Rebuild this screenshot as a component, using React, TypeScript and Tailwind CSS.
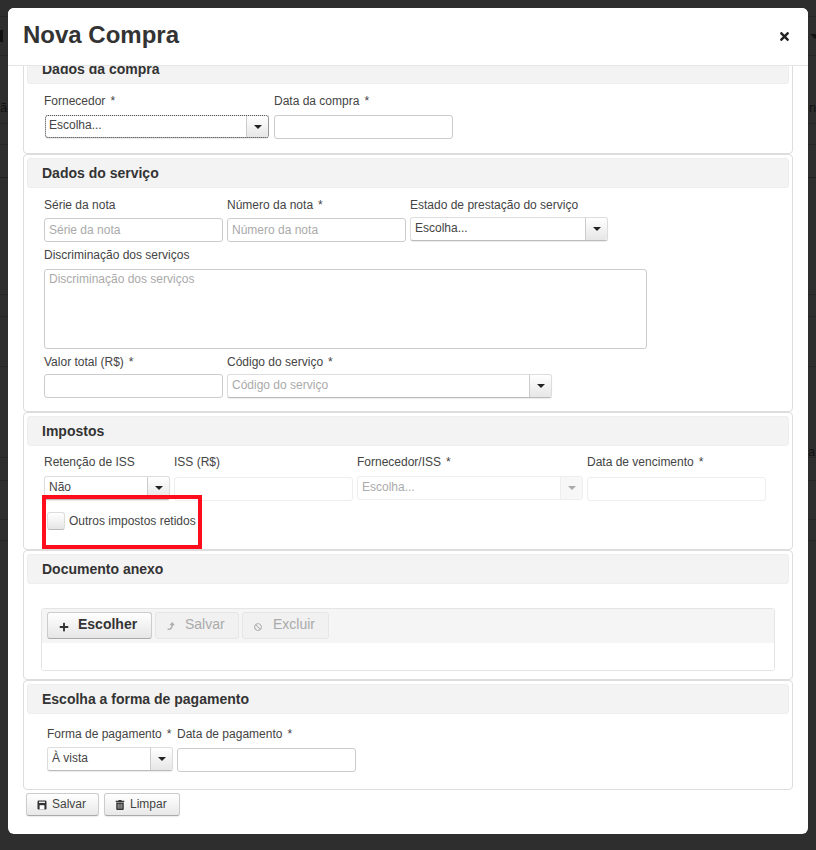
import type { ReactNode } from "react";
import { FaBan, FaPlus, FaTimes, FaTrashAlt } from "react-icons/fa";

const Caret = ({ faded }: { faded?: boolean }) => (
  <span className={`block w-0 h-0 border-x-[4px] border-x-transparent border-t-[4px] ${faded ? "border-t-[#aaa]" : "border-t-[#222]"}`} />
);

const Field = ({ label, required, labelClassName = "mb-[6px]", className, children }: { label: string; required?: boolean; labelClassName?: string; className: string; children: ReactNode }) => (
  <div className={`flex flex-col shrink-0 ${className}`}>
    <label className={`h-[14px] leading-[14px] whitespace-nowrap text-[12px] text-[#444] ${labelClassName}`}>
      {label}
      {required && <span className="ml-[5px]">*</span>}
    </label>
    {children}
  </div>
);

const TextInput = ({ placeholder, disabled }: { placeholder?: string; disabled?: boolean }) => (
  <input
    placeholder={placeholder}
    disabled={disabled}
    className={`mt-px h-[24px] w-full px-[4px] text-[12px] bg-white rounded-[3px] border outline-none placeholder:text-[#aaa] ${disabled ? "border-[#eee]" : "border-[#ccc]"}`}
  />
);

const Select = ({ value, className, placeholder, disabled, focused }: { value: string; className: string; placeholder?: boolean; disabled?: boolean; focused?: boolean }) => (
  <div
    className={`relative flex rounded-[3px] border bg-white ${className} ${disabled ? "border-[#eee]" : "border-[#ddd] border-b-[#bbb] shadow-[0_1px_1px_rgba(0,0,0,0.08)]"} ${focused ? "mt-px h-[23px] outline-1 -outline-offset-1 outline-dotted outline-[#555]" : "h-[24px]"}`}
  >
    <span className={`flex-1 text-[12px] leading-[16px] whitespace-nowrap ${focused ? "pl-[3px] pt-[1px]" : "pl-[4px] pt-[2px]"} ${placeholder ? "text-[#aaa]" : "text-[#444]"}`}>{value}</span>
    <span
      className={`flex w-[22px] items-center justify-center rounded-r-[3px] border-l ${disabled ? "border-[#eee] bg-[#f7f7f7]" : "border-[#ccc] bg-gradient-to-b from-[#fff] to-[#e6e6e6]"}`}
    >
      <Caret faded={disabled} />
    </span>
  </div>
);

const Panel = ({ title, className, bodyClassName, children }: { title: string; className: string; bodyClassName: string; children: ReactNode }) => (
  <section className={`relative shrink-0 rounded-[4px] border border-[#ddd] p-[3px] ${className}`}>
    <h3 className="h-[30px] pl-[14px] rounded-[3px] border border-[#eee] bg-[#f3f3f3] text-[14px] font-bold leading-[28px] text-[#333]">{title}</h3>
    <div className={bodyClassName}>{children}</div>
  </section>
);

const ToolButton = ({ icon, label, bold, disabled, className }: { icon: ReactNode; label: string; bold?: boolean; disabled?: boolean; className: string }) => (
  <button
    className={`flex h-[27px] items-center rounded-[3px] border text-[14px] ${className} ${bold ? "font-bold text-[#333]" : ""} ${disabled ? "border-[#e6e6e6] bg-[#f1f1f1] text-[#aaa]" : "border-[#ccc] border-b-[#aaa] bg-gradient-to-b from-[#fff] to-[#e6e6e6]"}`}
  >
    {icon}
    <span className="-mt-[3px]">{label}</span>
  </button>
);

const FootButton = ({ icon, label, className }: { icon: ReactNode; label: string; className: string }) => (
  <button className={`flex h-[23px] items-center rounded-[3px] border border-[#ccc] border-b-[#aaa] bg-gradient-to-b from-[#fff] to-[#e8e8e8] text-[12px] text-[#444] shadow-[0_1px_1px_rgba(0,0,0,0.08)] ${className}`}>
    {icon}
    <span className="-mt-[2px]">{label}</span>
  </button>
);

const UploadIcon = () => (
  <svg viewBox="0 0 8 8" className="ml-[11px] mr-[10px] mt-[1px] h-[8px] w-[8px] shrink-0">
    <polygon points="2.6,3.2 5.2,0 7.8,3.2" fill="#aaa" />
    <path d="M0.6 7.4C3.2 7.4 5.2 6.4 5.2 2.8" fill="none" stroke="#aaa" strokeWidth="1.4" />
  </svg>
);

const SaveIcon = () => (
  <svg viewBox="0 0 10 10" className="ml-[10px] mr-[5px] mt-[1px] h-[10px] w-[10px] shrink-0">
    <rect x="0.5" y="0.5" width="9" height="9" rx="1.2" fill="#333" />
    <rect x="2" y="1.6" width="6" height="1.3" fill="#fff" />
    <rect x="2.6" y="5.2" width="4.8" height="4.3" fill="#fff" />
  </svg>
);

// dark page behind the modal, only its edges are visible
const Backdrop = () => (
  <div className="h-[850px] bg-[#2e2e2e] relative">
    <div className="h-[17px] border-b border-[#262626]" />
    <div className="h-[39px] border-b border-[#262626]" />
    <div className="h-[68px] border-b border-[#262626]" />
    <div className="h-[21px] border-b border-[#262626]" />
    <div className="h-[33px] border-b border-[#1f1f1f]" />
    <div className="h-[117px] border-b border-[#262626]" />
    <div className="h-[22px] border-b border-[#262626]" />
    <div className="h-[50px] border-b border-[#262626]" />
    <div className="h-[91px] border-b border-[#262626]" />
    <div className="h-[23px] border-b border-[#262626]" />
    <div className="h-[39px] border-b border-[#262626]" />
    <div className="h-[21px] border-b border-[#262626]" />
    <span className="absolute left-0 top-[30px] h-[12px] w-[3px] bg-[#111]" />
    <span className="absolute left-0 top-[98px] text-[13px] text-[#111]">ão</span>
    <span className="absolute left-[809px] top-[98px] text-[13px] text-[#111]">n</span>
    <span className="absolute left-[808px] top-[442px] text-[13px] text-[#111]">a</span>
    <span className="absolute left-[810px] top-[34px] border-x-[5px] border-x-transparent border-t-[5px] border-t-[#111]" />
  </div>
);

const App = () => {
  return (
    <div className="relative h-[850px] w-[816px] overflow-hidden font-['Liberation_Sans',Arial,sans-serif] text-[#333]">
      <Backdrop />
      <div className="absolute left-[8px] top-[8px] flex h-[826px] w-[800px] flex-col overflow-hidden rounded-[6px] bg-white">
        <header className="flex h-[58px] shrink-0 items-center justify-between border-b border-[#e5e5e5] bg-white pb-[3px] pl-[15px] pr-[17px] relative z-10">
          <h1 className="text-[24px] font-bold leading-[30px] text-[#333]">Nova Compra</h1>
          <FaTimes className="mt-[3px] text-[13px] text-[#222]" />
        </header>
        <div className="flex flex-col px-[15px] -mt-[16px]">
          <Panel title="Dados da compra" className="h-[104px]" bodyClassName="flex gap-[4px] pl-[17px] pt-[10px]">
            <Field label="Fornecedor" required className="w-[226px]">
              <Select value="Escolha..." className="ml-px w-[224px]" focused />
            </Field>
            <Field label="Data da compra" required className="w-[179px]">
              <TextInput />
            </Field>
          </Panel>

          <Panel title="Dados do serviço" className="h-[258px]" bodyClassName="flex flex-col pl-[17px] pt-[10px]">
            <div className="flex gap-[4px]">
              <Field labelClassName="mb-[5px]" label="Série da nota" className="w-[179px]">
                <TextInput placeholder="Série da nota" />
              </Field>
              <Field labelClassName="mb-[5px]" label="Número da nota" required className="w-[179px]">
                <TextInput placeholder="Número da nota" />
              </Field>
              <Field labelClassName="mb-[5px]" label="Estado de prestação do serviço" className="w-[198px]">
                <Select value="Escolha..." className="w-[198px]" />
              </Field>
            </div>
            <Field label="Discriminação dos serviços" className="mt-[6px] w-[603px]">
              <textarea
                placeholder="Discriminação dos serviços"
                className="mt-px block h-[80px] w-full resize-none rounded-[3px] border border-[#ccc] px-[4px] py-0 text-[12px] outline-none placeholder:text-[#aaa]"
              />
            </Field>
            <div className="mt-[6px] flex gap-[4px]">
              <Field labelClassName="mb-[5px]" label="Valor total (R$)" required className="w-[179px]">
                <div className="-mt-px">
                  <TextInput />
                </div>
              </Field>
              <Field labelClassName="mb-[5px]" label="Código do serviço" required className="w-[325px]">
                <Select value="Código do serviço" placeholder className="w-[325px]" />
              </Field>
            </div>
          </Panel>

          <Panel title="Impostos" className="h-[138px]" bodyClassName="pl-[17px] pt-[9px]">
            <div className="flex gap-[4px]">
              <Field labelClassName="mb-[7px]" label="Retenção de ISS" className="w-[126px]">
                <Select value="Não" className="w-[126px]" />
              </Field>
              <Field labelClassName="mb-[7px]" label="ISS (R$)" className="w-[179px]">
                <TextInput disabled />
              </Field>
              <Field labelClassName="mb-[7px]" label="Fornecedor/ISS" required className="w-[226px]">
                <Select value="Escolha..." placeholder disabled className="w-[226px]" />
              </Field>
              <Field labelClassName="mb-[7px]" label="Data de vencimento" required className="w-[179px]">
                <TextInput disabled />
              </Field>
            </div>
            <div className="ml-[3px] mt-[10px] flex items-center gap-[4px]">
              <span className="h-[18px] w-[18px] rounded-[3px] border border-[#ddd] border-b-[#bbb] bg-gradient-to-b from-[#fff] to-[#e6e6e6]" />
              <span className="mt-[1px] text-[12px] text-[#444]">Outros impostos retidos</span>
            </div>
            <div className="absolute left-[18px] top-[82px] h-[54px] w-[160px] border-[4px] border-[#ff0d1d]" />
          </Panel>

          <Panel title="Documento anexo" className="h-[130px]" bodyClassName="pl-[14px] pt-[24px]">
            <div className="w-[734px] overflow-hidden rounded-[3px] border border-[#e5e5e5]">
              <div className="flex h-[34px] items-start gap-[3px] bg-[#f5f5f5] pl-[5px] pt-[3px]">
                <ToolButton bold icon={<FaPlus className="ml-[11px] mr-[9px] mt-[2px] text-[10px]" />} label="Escolher" className="w-[105px]" />
                <ToolButton disabled icon={<UploadIcon />} label="Salvar" className="w-[84px]" />
                <ToolButton disabled icon={<FaBan className="ml-[11px] mr-[11px] mt-[2px] text-[8px]" />} label="Excluir" className="w-[87px]" />
              </div>
              <div className="h-[27px] bg-white" />
            </div>
          </Panel>

          <Panel title="Escolha a forma de pagamento" className="h-[110px]" bodyClassName="flex gap-[4px] pl-[20px] pt-[13px]">
            <Field label="Forma de pagamento" required className="w-[126px]">
              <Select value="À vista" className="w-[126px]" />
            </Field>
            <Field label="Data de pagamento" required className="w-[179px]">
              <TextInput />
            </Field>
          </Panel>

          <div className="ml-[3px] mt-[3px] flex gap-[5px]">
            <FootButton icon={<SaveIcon />} label="Salvar" className="w-[73px]" />
            <FootButton icon={<FaTrashAlt className="ml-[10px] mr-[5px] mt-[1px] text-[10px] text-[#333]" />} label="Limpar" className="w-[76px]" />
          </div>
        </div>
      </div>
    </div>
  );
};

export default App;
